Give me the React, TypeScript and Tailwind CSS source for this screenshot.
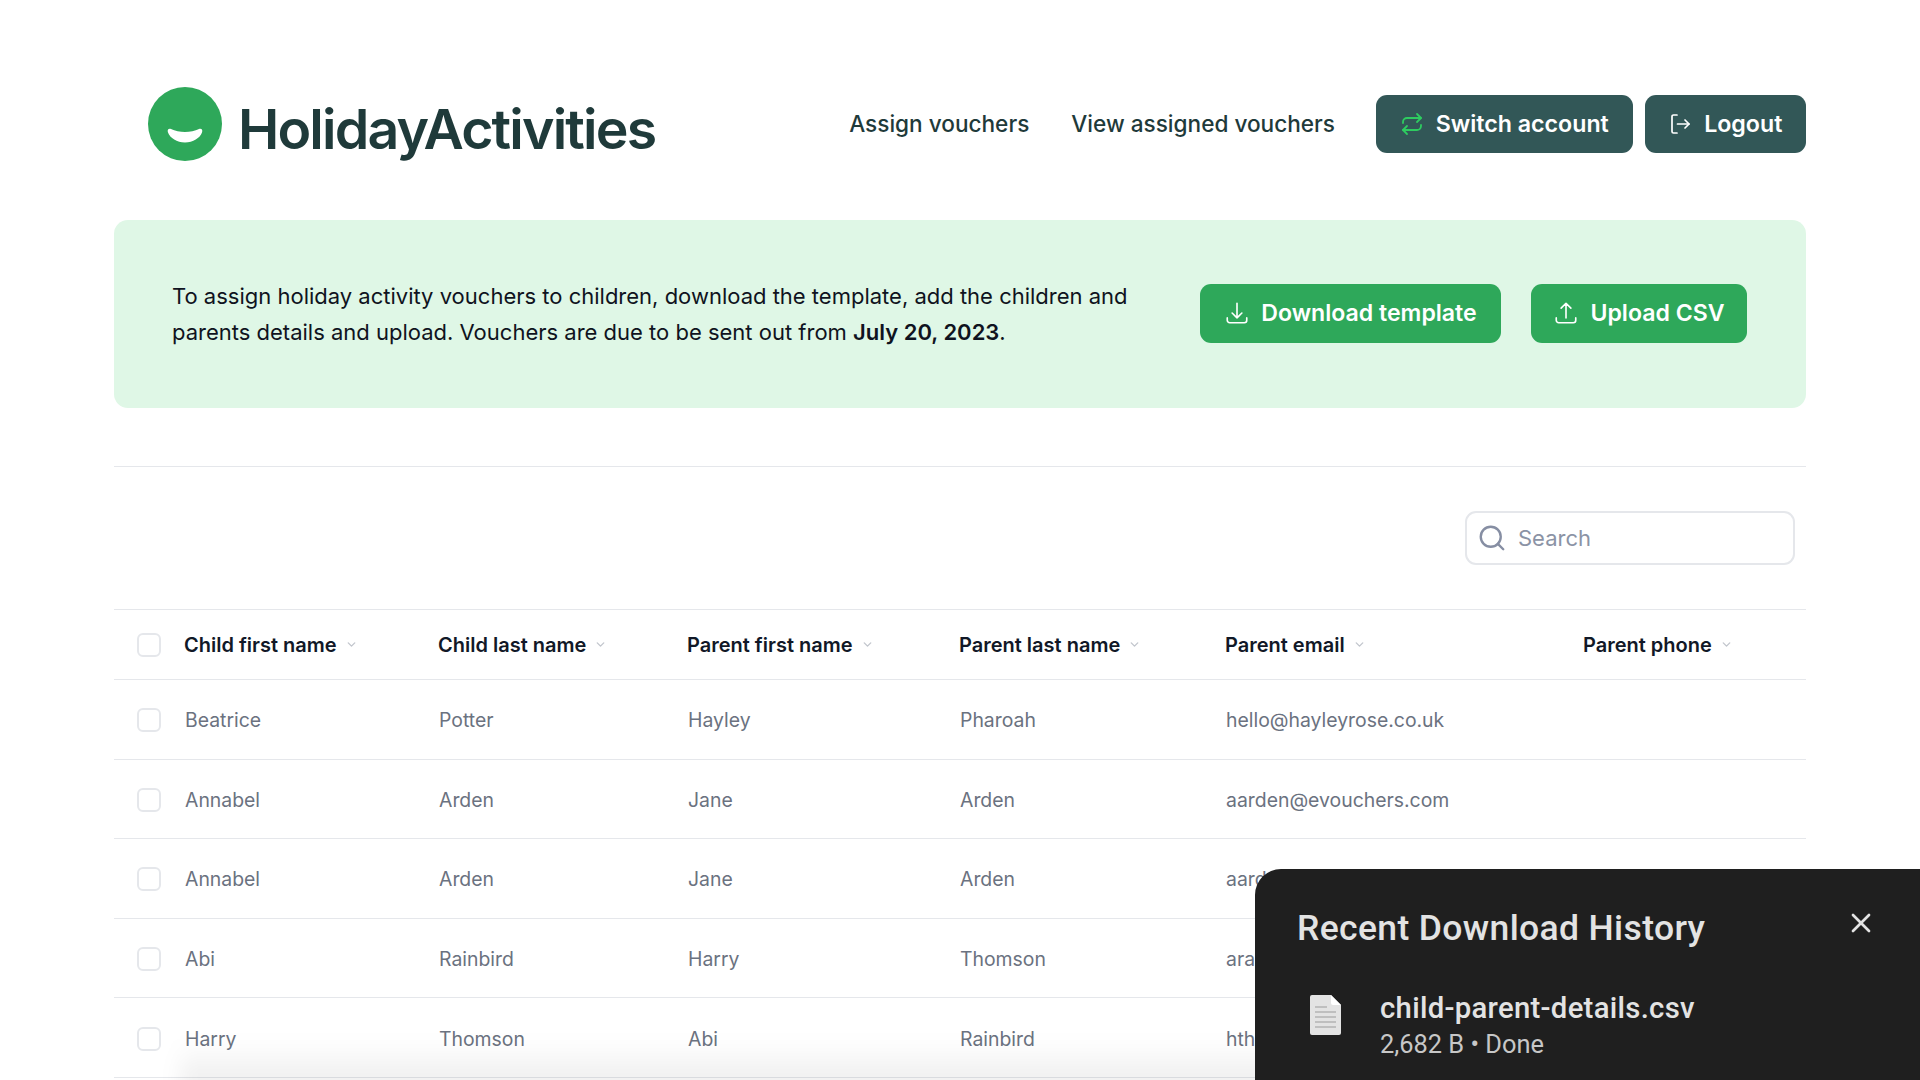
import React from "react";
import { Repeat, Search, X, ChevronDown } from "lucide-react";
import { HiOutlineArrowDownTray, HiOutlineArrowUpTray } from "react-icons/hi2";

const COLS = "grid grid-cols-[70px_254px_249px_272px_266px_358px_223px]";

const headers = ["Child first name", "Child last name", "Parent first name", "Parent last name", "Parent email", "Parent phone"];

const rows = [
  ["Beatrice", "Potter", "Hayley", "Pharoah", "hello@hayleyrose.co.uk", ""],
  ["Annabel", "Arden", "Jane", "Arden", "aarden@evouchers.com", ""],
  ["Annabel", "Arden", "Jane", "Arden", "aarden@evouchers.com", ""],
  ["Abi", "Rainbird", "Harry", "Thomson", "arainbird@evouchers.com", ""],
  ["Harry", "Thomson", "Abi", "Rainbird", "hthomson@evouchers.com", ""],
];

function Box({ low }: { low?: boolean }) {
  return <span className={`ml-[23px] block h-6 w-6 rounded-[6px] border-2 border-[#e5e7eb] bg-white ${low ? "mt-[2px]" : ""}`} />;
}

function LogoutIcon() {
  return (
    <svg width="24" height="24" viewBox="0 0 24 24" fill="none" stroke="currentColor" strokeWidth="1.7" strokeLinecap="round" strokeLinejoin="round">
      <path d="M9 3H5.500A1.500 1.500 0 0 0 4 4.500v15A1.500 1.500 0 0 0 5.500 21H9" />
      <path d="M9.500 12H21" />
      <path d="M17 8l4 4-4 4" />
    </svg>
  );
}

function FileIcon() {
  return (
    <svg width="31" height="40" viewBox="0 0 31 40">
      <path d="M2 0H21L31 10V38a2 2 0 0 1-2 2H2a2 2 0 0 1-2-2V2a2 2 0 0 1 2-2z" fill="#e3e3e3" />
      <path d="M21 0L31 10H23a2 2 0 0 1-2-2z" fill="#ffffff" />
      <path d="M5 12H17M5 17H26M5 22H26M5 27H26M5 32H26" stroke="#b4b4b4" strokeWidth="1.600" />
    </svg>
  );
}

export default function App() {
  return (
    <div className="relative h-screen w-full overflow-hidden bg-white font-['Inter',sans-serif] text-[#111827]">
      <div className="flex flex-col pl-[114px] pr-[114px]">
        <header className="flex h-[220px] items-center justify-between pl-[34px] pt-[28px]">
          <div className="flex items-center gap-4">
            <svg width="74" height="74" viewBox="0 0 74 74" className="shrink-0">
              <circle cx="37" cy="37" r="37" fill="#2ea85a" />
              <path d="M23 42c-2.500-1-4 1-3 3.500C22 51 29 55.500 37 55.500S52 51 54 45.500c1-2.500-.5-4.500-3-3.500C47 44 42 45 37 45S27 44 23 42z" fill="#ffffff" />
            </svg>
            <span className="mt-[10px] text-[55.4px] font-semibold leading-none tracking-[-0.033em] text-[#1f3a3a]">HolidayActivities</span>
          </div>
          <nav className="flex items-center text-[22.6px] font-medium text-[#1f3a3a]">
            <a className="mr-[42px]">Assign vouchers</a>
            <a className="mr-[41px]">View assigned vouchers</a>
            <button className="mr-3 flex h-[58.5px] w-[256.5px] items-center justify-center gap-[12px] rounded-[11px] bg-[#325757] text-[23.2px] font-semibold text-white">
              <Repeat size={24} strokeWidth={1.8} className="text-[#2ecc60]" />
              Switch account
            </button>
            <button className="flex h-[58.5px] w-[161.5px] items-center justify-center gap-[12px] rounded-[11px] bg-[#325757] text-[23.2px] font-semibold text-white">
              <LogoutIcon />
              Logout
            </button>
          </nav>
        </header>

        <section className="flex h-[188px] items-center justify-between rounded-[14px] bg-[#dff7e6] pl-[58px] pr-[59px]">
          <p className="whitespace-nowrap text-[22px] leading-[36px] text-[#0f1320]">
            To assign holiday activity vouchers to children, download the template, add the children and
            <br />
            parents details and upload. Vouchers are due to be sent out from <strong className="font-semibold">July 20, 2023</strong>.
          </p>
          <div className="mb-[2px] flex gap-[30px] text-[23.1px] font-semibold text-white">
            <button className="flex h-[59px] w-[301px] items-center justify-center gap-[11px] rounded-[11px] bg-[#2ea85a]">
              <HiOutlineArrowDownTray size={26} />
              Download template
            </button>
            <button className="flex h-[59px] w-[216px] items-center justify-center gap-[11px] rounded-[11px] bg-[#2ea85a]">
              <HiOutlineArrowUpTray size={26} />
              Upload CSV
            </button>
          </div>
        </section>

        <div className="mt-[58px] border-t border-[#e5e7eb]" />

        <div className="flex h-[142px] items-start justify-end pr-[11px] pt-[44px]">
          <div className="flex h-[54px] w-[330px] items-center gap-[11px] rounded-[11px] border-2 border-[#e5e7eb] bg-white pl-[10px] text-[22px] text-[#8b93a5]">
            <Search size={30} strokeWidth={1.9} className="text-[#868ea3]" />
            <span className="pt-[1px]">Search</span>
          </div>
        </div>

        <div className={`${COLS} h-[71px] items-center border-y border-[#e5e7eb] text-[20px] font-semibold text-[#111827]`}>
          <Box />
          {headers.map((h) => (
            <div key={h} className="flex items-center gap-2">
              {h}
              <ChevronDown size={13} strokeWidth={2.5} className="text-[#c2c6cd]" />
            </div>
          ))}
        </div>

        {rows.map((r, i) => (
          <div key={i} className={`${COLS} h-[79.6px] shrink-0 items-center border-b border-[#e5e7eb] text-[19.4px] text-[#6b7280]`}>
            <Box low />
            {r.map((c, j) => (
              <div key={j} className="pl-[1px] pt-[3px]">
                {c}
              </div>
            ))}
          </div>
        ))}
      </div>

      <div className="pointer-events-none absolute bottom-[-10px] left-[180px] right-0 h-[50px] bg-gradient-to-b from-transparent to-[#00000014] blur-[10px]" />

      <aside className="absolute bottom-0 right-0 h-[211px] w-[665px] rounded-tl-[26px] bg-[#1f1f1f] pl-[42px] pt-[37px] font-['Roboto',sans-serif] text-[#e3e3e3]">
        <div className="text-[35.5px] font-medium leading-[44px] tracking-[0.01em]">Recent Download History</div>
        <X size={32} strokeWidth={2} className="absolute right-[43px] top-[38px] text-[#e3e3e3]" />
        <div className="mt-[40px] flex items-start gap-[39px] pl-[13px]">
          <div className="pt-[5px]">
            <FileIcon />
          </div>
          <div>
            <div className="text-[29.3px] font-medium leading-[36px] tracking-[0.01em]">child-parent-details.csv</div>
            <div className="mt-[2px] text-[25.4px] leading-[32px] text-[#c7c7c7]">2,682 B • Done</div>
          </div>
        </div>
      </aside>
    </div>
  );
}
